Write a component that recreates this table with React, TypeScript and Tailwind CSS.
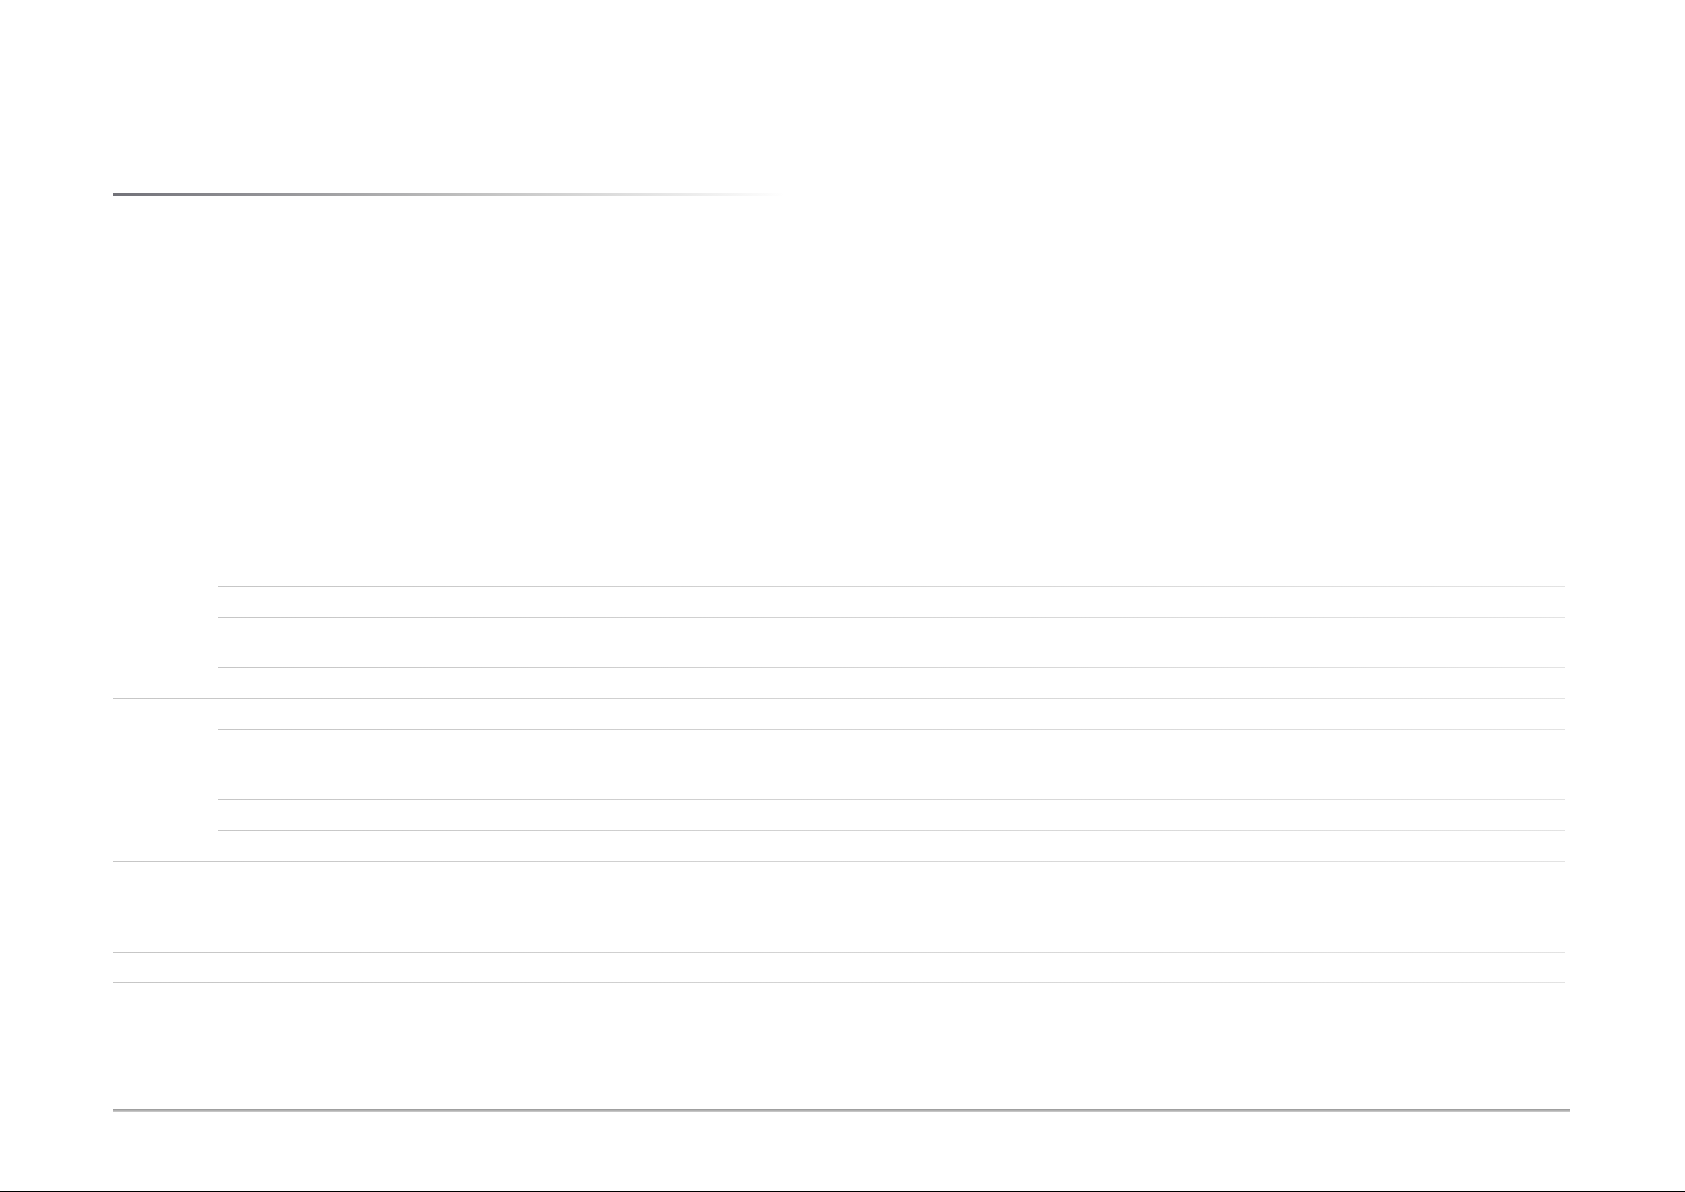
const Line = ({ inset = false }: { inset?: boolean }) => (
  <div className={`h-px bg-gradient-to-r from-[#c6c6c6] to-[#e3e3e3] ${inset ? 'ml-[105px]' : ''}`} />
);

const Row = ({ h }: { h: string }) => <div className={h} />;

export default function App() {
  return (
    <div className="h-[1192px] w-full bg-white flex flex-col font-['Liberation_Sans',sans-serif]">
      <div className="pl-[113px] pt-[193px]">
        {/* header rule */}
        <div className="h-[3px] w-[672px] bg-gradient-to-r from-[#727279] via-[#bcbcbc] to-transparent" />

        {/* table */}
        <div className="w-[1452px] mt-[359px]">
          {/* group A */}
          <div className="ml-[105px]">
            <Row h="h-[31px]" />
            <Line />
            <Row h="h-[30px]" />
            <Line />
            <Row h="h-[49px]" />
            <Line />
            <Row h="h-[30px]" />
          </div>
          <Line />

          {/* group B */}
          <div className="ml-[105px]">
            <Row h="h-[30px]" />
            <Line />
            <Row h="h-[69px]" />
            <Line />
            <Row h="h-[30px]" />
            <Line />
            <Row h="h-[30px]" />
          </div>
          <Line />

          {/* group C */}
          <Row h="h-[90px]" />
          <Line />
          <Row h="h-[29px]" />
          <Line />
        </div>

        {/* footer rule */}
        <div className="mt-[126px] h-[3px] w-[1457px] bg-gradient-to-b from-[#969696] to-[#cfcfcf]" />
      </div>

      <div className="mt-auto h-px w-full bg-black" />
    </div>
  );
}
